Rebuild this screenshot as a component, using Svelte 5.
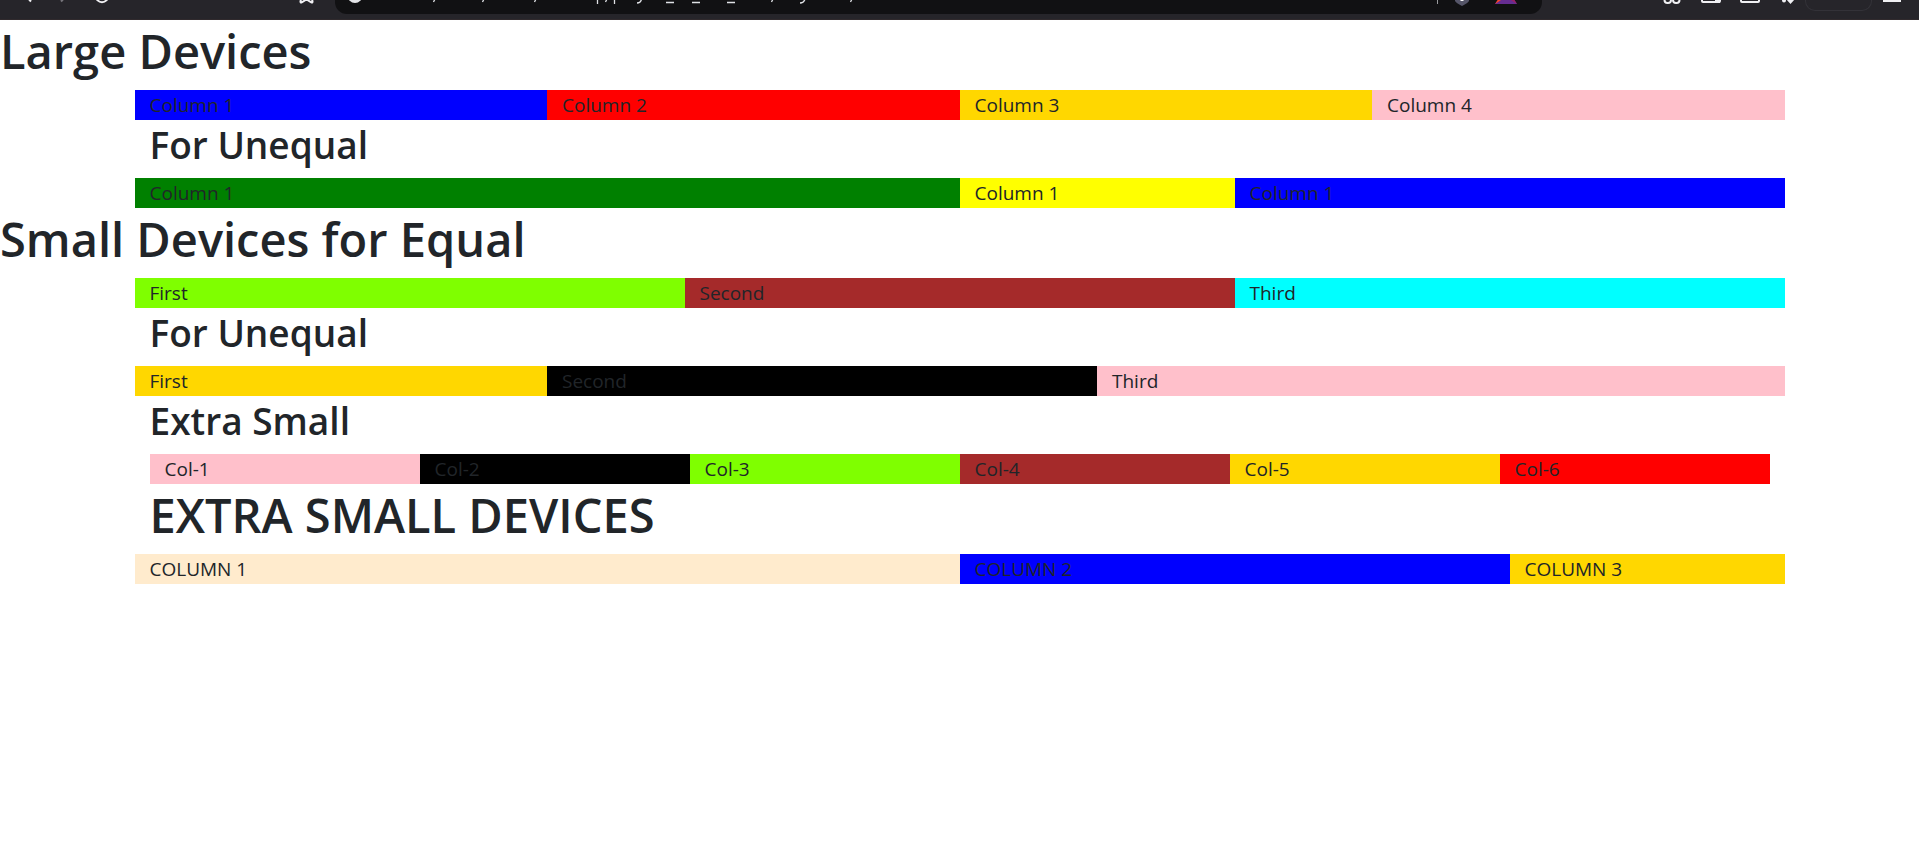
<script>
  const largeEqual = [
    { text: 'Column 1', span: 3, color: 'blue' },
    { text: 'Column 2', span: 3, color: 'red' },
    { text: 'Column 3', span: 3, color: 'gold' },
    { text: 'Column 4', span: 3, color: 'pink' }
  ];
  const largeUnequal = [
    { text: 'Column 1', span: 6, color: 'green' },
    { text: 'Column 1', span: 2, color: 'yellow' },
    { text: 'Column 1', span: 4, color: 'blue' }
  ];
  const smallEqual = [
    { text: 'First', span: 4, color: 'chartreuse' },
    { text: 'Second', span: 4, color: 'brown' },
    { text: 'Third', span: 4, color: 'aqua' }
  ];
  const smallUnequal = [
    { text: 'First', span: 3, color: 'gold' },
    { text: 'Second', span: 4, color: 'black' },
    { text: 'Third', span: 5, color: 'pink' }
  ];
  const extraSmall = [
    { text: 'Col-1', span: 2, color: 'pink' },
    { text: 'Col-2', span: 2, color: 'black' },
    { text: 'Col-3', span: 2, color: 'chartreuse' },
    { text: 'Col-4', span: 2, color: 'brown' },
    { text: 'Col-5', span: 2, color: 'gold' },
    { text: 'Col-6', span: 2, color: 'red' }
  ];
  const extraSmallDevices = [
    { text: 'COLUMN 1', span: 6, color: 'blanchedalmond' },
    { text: 'COLUMN 2', span: 4, color: 'blue' },
    { text: 'COLUMN 3', span: 2, color: 'gold' }
  ];
</script>

{#snippet row(columns)}
  <div class="row">
    {#each columns as column}
      <div class="col" style:grid-column={`span ${column.span}`} style:background-color={column.color}>{column.text}</div>
    {/each}
  </div>
{/snippet}

<header class="toolbar">
  <nav class="navigation" aria-label="Navigation">
    <button aria-label="Back"><svg viewBox="0 0 24 20"><path d="M5-5 11 1.500" /></svg></button>
    <button class="dim" aria-label="Forward"><svg viewBox="0 0 24 20"><path d="M11-5 5 1.500" /></svg></button>
    <button aria-label="Reload"><svg viewBox="0 0 24 20"><circle cx="10" cy="-4" r="6.200" /></svg></button>
    <button class="bookmark" aria-label="Bookmark"><svg viewBox="0 0 24 20"><path d="M7-6 5.500 1.500Q5.300 3 6.700 2.400L11.500-.5 16.300 2.400Q17.700 3 17.500 1.500L16-6" /></svg></button>
  </nav>
  <div class="address">
    <svg class="location" viewBox="0 0 540 14" aria-hidden="true">
      <circle cx="20" cy="-4.500" r="7.500" fill="#e4e5e8" />
      <g fill="none" stroke="#dfe1e5" stroke-width="1.300">
        <path d="M100-1 98.500 2M149-1 147.500 2M201-1 199.500 2M262.500-1V4M272-1 270.500 2M279.500-1V4M306.500-1Q306 3 302 3M331 2.500H339M357 2.500H365M392 2.500H400M438-1 436.500 2M470-1Q469 3 465 3M517-1 515.500 2" />
      </g>
    </svg>
    <div class="actions">
      <svg viewBox="0 0 24 14" aria-hidden="true"><path d="M19.500 0V4" stroke="#999a9e" /></svg>
      <button aria-label="Shields"><svg viewBox="0 0 24 14"><path d="M5-8H19V1Q18 3 12 6 6 3 5 1Z" fill="#555568" /><path d="M12-2V1" stroke="#fff" stroke-width="3" /></svg></button>
      <button aria-label="Rewards"><svg viewBox="0 0 24 14"><path d="M1 4 7-4H18L23 4Z" fill="#662d91" /><path d="M1 4 5-2 7 0Z" fill="#ff4724" /><path d="M23 4 19-2 17 0Z" fill="#9e1f63" /></svg></button>
    </div>
  </div>
  <div class="tools">
    <button aria-label="Extensions"><svg viewBox="0 0 24 20"><rect x="4.500" y="-3" width="6.500" height="6" rx="3" /><rect x="13" y="-3" width="6.500" height="6" rx="3" /><path d="M8-1H16" /></svg></button>
    <button aria-label="Sidebar"><svg viewBox="0 0 24 20"><path d="M3-5V1Q3 2 4 2H20Q21 2 21 1V-5" /><path d="M17-5V2H20V-5" fill="#f0f0f3" /></svg></button>
    <button aria-label="Wallet"><svg viewBox="0 0 24 20"><path d="M3-5V1Q3 2 4 2H20Q21 2 21 1V-5" /></svg></button>
    <button aria-label="Assistant"><svg viewBox="0 0 24 20"><circle cx="7" cy="0.500" r="1" /><path d="M9-1 18-1 13.500 4Z" fill="#f0f0f3" stroke="none" /></svg></button>
    <button class="profile" aria-label="Profile"></button>
    <button aria-label="Menu"><svg viewBox="0 0 24 20"><path d="M3 1H21" /></svg></button>
  </div>
</header>

<main>
  <h1>Large Devices</h1>
  <section class="container">
    {@render row(largeEqual)}
    <h2>For Unequal</h2>
    {@render row(largeUnequal)}
  </section>

  <h1>Small Devices for Equal</h1>
  <section class="container">
    {@render row(smallEqual)}
    <h2>For Unequal</h2>
    {@render row(smallUnequal)}
    <h2>Extra Small</h2>
    <div class="nested">{@render row(extraSmall)}</div>
    <h1>EXTRA SMALL DEVICES</h1>
    {@render row(extraSmallDevices)}
  </section>
</main>

<style>
  :global(body) {
    margin: 0;
    background: #fff;
  }

  .toolbar {
    display: flex;
    box-sizing: border-box;
    height: 20px;
    overflow: hidden;
    background: #26252a;
    border-bottom: 1px solid #302a2d;
  }

  button {
    display: block;
    flex: none;
    width: 24px;
    height: 20px;
    padding: 0;
    border: 0;
    background: none;
  }

  button svg {
    display: block;
    width: 24px;
    height: 20px;
    fill: none;
    stroke: #f0f0f3;
    stroke-width: 2;
  }

  .dim svg {
    stroke: #77767c;
  }

  .navigation {
    display: flex;
    flex: none;
    gap: 12px;
    box-sizing: border-box;
    width: 335px;
    padding: 0 16px 0 20px;
  }

  .bookmark {
    margin-left: auto;
  }

  .address {
    display: flex;
    flex: 1;
    justify-content: space-between;
    height: 14px;
    min-width: 0;
    overflow: hidden;
    background: #111113;
    border-radius: 0 0 12px 12px;
  }

  .location {
    flex: 0 1 540px;
    width: 540px;
    height: 14px;
  }

  .actions {
    display: flex;
    gap: 20px;
    padding-right: 24px;
  }

  .actions svg,
  .actions button {
    width: 24px;
    height: 14px;
    stroke: none;
  }

  .actions button:first-of-type {
    margin-left: -12px;
  }

  .tools {
    display: flex;
    flex: none;
    justify-content: flex-end;
    gap: 15px;
    box-sizing: border-box;
    width: 377px;
    padding-right: 15px;
  }

  .tools .profile {
    box-sizing: border-box;
    width: 67px;
    height: 11px;
    margin: 0 -7px 0 -11px;
    border: 1px solid #333238;
    border-top: 0;
    border-radius: 0 0 10px 10px;
  }

  main {
    color: #212529;
    font-family: "Segoe UI", "Open Sans", "Noto Sans", sans-serif;
    font-size: 19px;
    line-height: 30px;
  }

  h1,
  h2 {
    margin: 0 0 8px;
    font-weight: 600;
  }

  h1 {
    font-size: 47px;
    line-height: 62px;
  }

  h2 {
    font-size: 37px;
    line-height: 50px;
  }

  .container {
    box-sizing: border-box;
    width: 100%;
    max-width: 1650px;
    margin: 0 auto;
    padding: 0 15px;
  }

  .row {
    display: grid;
    grid-template-columns: repeat(12, minmax(0, 1fr));
    margin: 0 -15px;
  }

  .col {
    padding: 0 15px;
  }

  .nested {
    padding: 0 15px;
  }
</style>
